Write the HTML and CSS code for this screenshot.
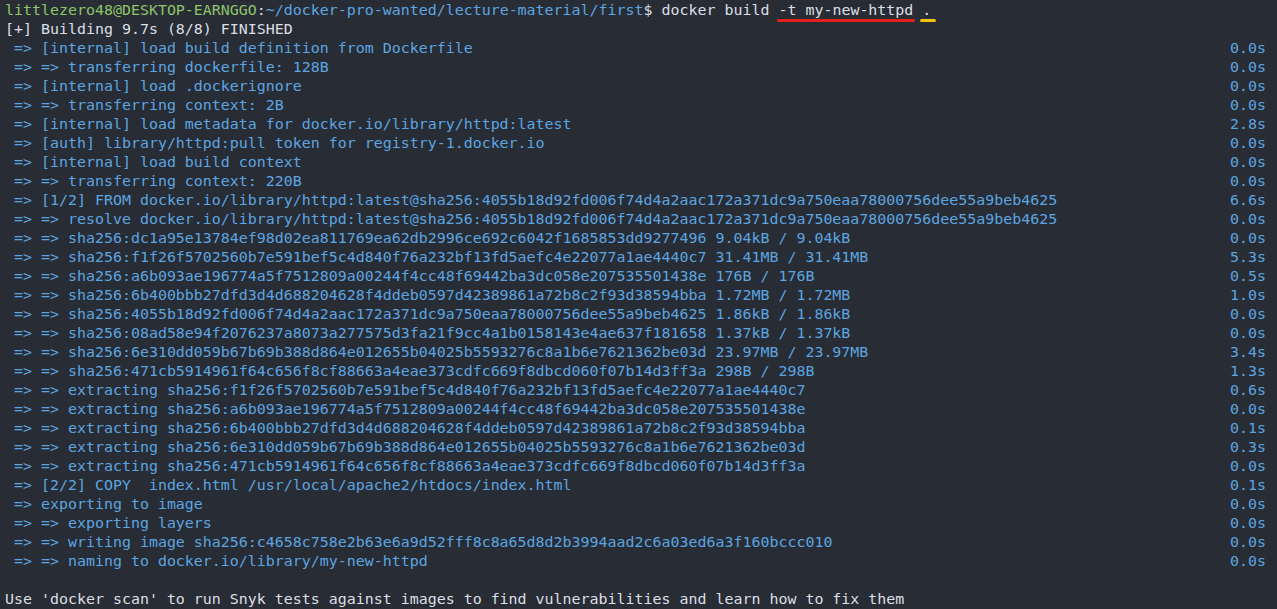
FILE: index.html
```html
<!DOCTYPE html>
<html>
<head>
<meta charset="utf-8">
<link rel="stylesheet" href="styles.css">
</head>
<body>
<div class="term">
  <div class="line prompt"><span class="g">littlezero48@DESKTOP-EARNGGO</span><span class="w">:</span><span class="b">~/docker-pro-wanted/lecture-material/first</span><span class="w">$ docker build <span class="mark red">-t my-new-httpd</span> <span class="mark yellow">.</span></span></div>
  <div class="line w">[+] Building 9.7s (8/8) FINISHED</div>
  <div class="row"><span> =&gt; [internal] load build definition from Dockerfile</span><span>0.0s</span></div>
  <div class="row"><span> =&gt; =&gt; transferring dockerfile: 128B</span><span>0.0s</span></div>
  <div class="row"><span> =&gt; [internal] load .dockerignore</span><span>0.0s</span></div>
  <div class="row"><span> =&gt; =&gt; transferring context: 2B</span><span>0.0s</span></div>
  <div class="row"><span> =&gt; [internal] load metadata for docker.io/library/httpd:latest</span><span>2.8s</span></div>
  <div class="row"><span> =&gt; [auth] library/httpd:pull token for registry-1.docker.io</span><span>0.0s</span></div>
  <div class="row"><span> =&gt; [internal] load build context</span><span>0.0s</span></div>
  <div class="row"><span> =&gt; =&gt; transferring context: 220B</span><span>0.0s</span></div>
  <div class="row"><span> =&gt; [1/2] FROM docker.io/library/httpd:latest@sha256:4055b18d92fd006f74d4a2aac172a371dc9a750eaa78000756dee55a9beb4625</span><span>6.6s</span></div>
  <div class="row"><span> =&gt; =&gt; resolve docker.io/library/httpd:latest@sha256:4055b18d92fd006f74d4a2aac172a371dc9a750eaa78000756dee55a9beb4625</span><span>0.0s</span></div>
  <div class="row"><span> =&gt; =&gt; sha256:dc1a95e13784ef98d02ea811769ea62db2996ce692c6042f1685853dd9277496 9.04kB / 9.04kB</span><span>0.0s</span></div>
  <div class="row"><span> =&gt; =&gt; sha256:f1f26f5702560b7e591bef5c4d840f76a232bf13fd5aefc4e22077a1ae4440c7 31.41MB / 31.41MB</span><span>5.3s</span></div>
  <div class="row"><span> =&gt; =&gt; sha256:a6b093ae196774a5f7512809a00244f4cc48f69442ba3dc058e207535501438e 176B / 176B</span><span>0.5s</span></div>
  <div class="row"><span> =&gt; =&gt; sha256:6b400bbb27dfd3d4d688204628f4ddeb0597d42389861a72b8c2f93d38594bba 1.72MB / 1.72MB</span><span>1.0s</span></div>
  <div class="row"><span> =&gt; =&gt; sha256:4055b18d92fd006f74d4a2aac172a371dc9a750eaa78000756dee55a9beb4625 1.86kB / 1.86kB</span><span>0.0s</span></div>
  <div class="row"><span> =&gt; =&gt; sha256:08ad58e94f2076237a8073a277575d3fa21f9cc4a1b0158143e4ae637f181658 1.37kB / 1.37kB</span><span>0.0s</span></div>
  <div class="row"><span> =&gt; =&gt; sha256:6e310dd059b67b69b388d864e012655b04025b5593276c8a1b6e7621362be03d 23.97MB / 23.97MB</span><span>3.4s</span></div>
  <div class="row"><span> =&gt; =&gt; sha256:471cb5914961f64c656f8cf88663a4eae373cdfc669f8dbcd060f07b14d3ff3a 298B / 298B</span><span>1.3s</span></div>
  <div class="row"><span> =&gt; =&gt; extracting sha256:f1f26f5702560b7e591bef5c4d840f76a232bf13fd5aefc4e22077a1ae4440c7</span><span>0.6s</span></div>
  <div class="row"><span> =&gt; =&gt; extracting sha256:a6b093ae196774a5f7512809a00244f4cc48f69442ba3dc058e207535501438e</span><span>0.0s</span></div>
  <div class="row"><span> =&gt; =&gt; extracting sha256:6b400bbb27dfd3d4d688204628f4ddeb0597d42389861a72b8c2f93d38594bba</span><span>0.1s</span></div>
  <div class="row"><span> =&gt; =&gt; extracting sha256:6e310dd059b67b69b388d864e012655b04025b5593276c8a1b6e7621362be03d</span><span>0.3s</span></div>
  <div class="row"><span> =&gt; =&gt; extracting sha256:471cb5914961f64c656f8cf88663a4eae373cdfc669f8dbcd060f07b14d3ff3a</span><span>0.0s</span></div>
  <div class="row"><span> =&gt; [2/2] COPY  index.html /usr/local/apache2/htdocs/index.html</span><span>0.1s</span></div>
  <div class="row"><span> =&gt; exporting to image</span><span>0.0s</span></div>
  <div class="row"><span> =&gt; =&gt; exporting layers</span><span>0.0s</span></div>
  <div class="row"><span> =&gt; =&gt; writing image sha256:c4658c758e2b63e6a9d52fff8c8a65d8d2b3994aad2c6a03ed6a3f160bccc010</span><span>0.0s</span></div>
  <div class="row"><span> =&gt; =&gt; naming to docker.io/library/my-new-httpd</span><span>0.0s</span></div>
  <div class="line"> </div>
  <div class="line w">Use 'docker scan' to run Snyk tests against images to find vulnerabilities and learn how to fix them</div>
</div>
</body>
</html>
```
FILE: styles.css
```css
html, body {
  margin: 0;
  padding: 0;
  background: #282c34;
}
.term {
  width: 1277px;
  height: 609px;
  box-sizing: border-box;
  padding: 1px 11px 0 5px;
  font-family: "DejaVu Sans Mono", "Liberation Mono", monospace;
  font-size: 14.95px;
  line-height: 19px;
  color: #5ca5e0;
  overflow: hidden;
}
.line {
  height: 19px;
  white-space: pre;
}
.row {
  display: flex;
  justify-content: space-between;
  height: 19px;
  white-space: pre;
}
.g { color: #8ec46a; }
.b { color: #5ca5e0; }
.w { color: #dcdfe4; }
.mark {
  position: relative;
}
.mark::after {
  content: "";
  position: absolute;
  height: 3px;
  border-radius: 2px;
  top: 18px;
}
.red::after {
  left: -1px;
  right: -2px;
  background: #e3201c;
}
.yellow::after {
  left: -2px;
  right: -5px;
  background: #f4c400;
}
```
